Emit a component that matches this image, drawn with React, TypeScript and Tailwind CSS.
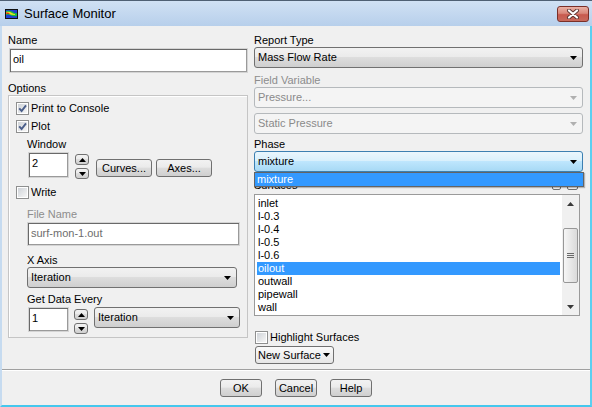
import React from "react";

const btnGrad =
  "bg-[linear-gradient(#f2f2f2_0%,#ebebeb_45%,#dddddd_50%,#cfcfcf_100%)]";
const sunken =
  "bg-white border border-[#d4d4d4] shadow-[inset_1px_1px_0_#696969,inset_-1px_-1px_0_#9a9a9a]";

function Arrow({ color = "#000", up = false }: { color?: string; up?: boolean }) {
  return (
    <svg width="7" height="4" viewBox="0 0 7 4" className="shrink-0">
      <path d={up ? "M0 4H7L3.5 0Z" : "M0 0H7L3.5 4Z"} fill={color} />
    </svg>
  );
}

function Select({
  value,
  className = "",
  variant = "normal",
}: {
  value: string;
  className?: string;
  variant?: "normal" | "disabled" | "focus";
}) {
  const v =
    variant === "disabled"
      ? "border-[#b5b9bc] bg-[#f4f4f4] text-[#8a8a8a]"
      : variant === "focus"
      ? "border-[#3c7fb1] bg-[linear-gradient(#eaf6fd_0%,#d9f0fc_45%,#bee6fd_50%,#a7d9f5_100%)]"
      : `border-[#707070] ${btnGrad}`;
  return (
    <div
      className={`h-[21px] rounded-[3px] border flex items-center justify-between pl-[3px] pr-[5px] ${v} ${className}`}
    >
      <span>{value}</span>
      <Arrow color={variant === "disabled" ? "#b0b0b0" : "#000"} />
    </div>
  );
}

function Check({ checked = false }: { checked?: boolean }) {
  return (
    <span className="w-[13px] h-[13px] border border-[#8e8f8f] bg-white p-px flex shrink-0">
      <span className="flex-1 bg-[linear-gradient(135deg,#cfd3d8,#f6f6f6)] flex items-center justify-center">
        {checked && (
          <svg width="9" height="9" viewBox="0 0 9 9">
            <path d="M1.2 4.3 L3.6 7 L8 1.3" fill="none" stroke="#4a5e8a" strokeWidth="1.9" />
          </svg>
        )}
      </span>
    </span>
  );
}

function CheckRow({ label, checked }: { label: string; checked?: boolean }) {
  return (
    <div className="flex items-center h-[13px] gap-[2px]">
      <Check checked={checked} />
      <span>{label}</span>
    </div>
  );
}

function Button({ label, className = "" }: { label: string; className?: string }) {
  return (
    <div
      className={`h-[18px] rounded-[3px] border border-[#707070] ${btnGrad} flex items-center justify-center ${className}`}
    >
      {label}
    </div>
  );
}

function SpinBtn({ up }: { up?: boolean }) {
  return (
    <div
      className={`w-[14px] h-[11px] rounded-[3px] border border-[#707070] ${btnGrad} flex items-center justify-center`}
    >
      <Arrow up={up} />
    </div>
  );
}

function Spinner() {
  return (
    <div className="flex flex-col gap-[3px] pt-[2px]">
      <SpinBtn up />
      <SpinBtn />
    </div>
  );
}

const surfaces = ["inlet", "l-0.3", "l-0.4", "l-0.5", "l-0.6", "oilout", "outwall", "pipewall", "wall"];

export default function App() {
  return (
    <div className="w-[592px] h-[407px] flex flex-col bg-[#f0f0f0] overflow-hidden font-['Liberation_Sans',Arial,sans-serif] text-[11px] leading-[13px] text-black">
      {/* Title bar */}
      <div className="h-[26px] shrink-0 flex items-center border-t border-[#4f6074] bg-[linear-gradient(#d0e1f4,#b7cfeb)] pl-[5px] pr-[3px]">
        <svg width="13" height="10" viewBox="0 0 13 10" className="shrink-0">
          <rect x="0" y="0" width="13" height="10" fill="#111" />
          <rect x="1" y="1" width="11" height="8" fill="#1f3fd0" />
          <path d="M1 2 Q5 1 8 3 Q10 5 12 4 L12 7 Q8 8 5 6 Q3 5 1 6Z" fill="#18c040" />
          <path d="M1 3 Q4 2 7 4 Q8 5 10 5 L10 6 Q6 6 4 5 Q2 4 1 5Z" fill="#f0e020" />
          <path d="M1 3.5 Q3 3 5 4.5 L3 5 Q2 4.5 1 4.5Z" fill="#e02010" />
        </svg>
        <span className="ml-[6px] text-[13px] leading-[15px]">Surface Monitor</span>
        <div className="ml-auto w-[32px] h-[16px] rounded-[3px] border border-[#7a2f28] bg-[linear-gradient(#eab1a4_0%,#d9877a_45%,#c85a4e_55%,#c86a5c_100%)] flex items-center justify-center">
          <svg width="14" height="10" viewBox="0 0 14 10">
            <path d="M3 1.5 L11 8.5 M11 1.5 L3 8.5" stroke="#5a3431" strokeWidth="4" strokeLinecap="round" />
            <path d="M3 1.5 L11 8.5 M11 1.5 L3 8.5" stroke="#ffffff" strokeWidth="2.2" strokeLinecap="round" />
          </svg>
        </div>
      </div>

      {/* Body */}
      <div className="flex-1 flex flex-col border-l-2 border-l-[#c6dbf0] border-r-2 border-r-[#5ccff0] border-b-2 border-b-[#45c7ed]">
        <div className="h-[343px] shrink-0 flex pt-[8px] pl-[6px]">
          {/* Left column */}
          <div className="w-[240px] flex flex-col">
            <div className="h-[13px]">Name</div>
            <div className={`ml-[1px] mt-[1px] h-[25px] w-[239px] ${sunken} pl-[3px] pt-[4px]`}>oil</div>
            <div className="mt-[9px] h-[13px]">Options</div>
            <div className="h-[243px] border border-[#c5c5c5] shadow-[inset_1px_1px_0_#ffffff] pl-[7px] pt-[6px] flex flex-col">
              <CheckRow label="Print to Console" checked />
              <div className="mt-[5px]">
                <CheckRow label="Plot" checked />
              </div>
              <div className="mt-[5px] ml-[11px] h-[13px]">Window</div>
              <div className="mt-[1px] flex items-start">
                <div className={`ml-[12px] w-[41px] h-[26px] ${sunken} pl-[3px] pt-[4px]`}>2</div>
                <div className="ml-[6px]">
                  <Spinner />
                </div>
                <Button label="Curves..." className="ml-[7px] mt-[7px] w-[56px]" />
                <Button label="Axes..." className="ml-[4px] mt-[7px] w-[56px]" />
              </div>
              <div className="mt-[7px]">
                <CheckRow label="Write" />
              </div>
              <div className="mt-[9px] ml-[11px] h-[13px] text-[#8d8d8d]">File Name</div>
              <div
                className={`mt-[1px] ml-[11px] w-[213px] h-[24px] ${sunken} pl-[3px] pt-[4px] text-[#6d6d6d]`}
              >
                surf-mon-1.out
              </div>
              <div className="mt-[8px] ml-[11px] h-[13px]">X Axis</div>
              <Select value="Iteration" className="ml-[11px] w-[210px]" />
              <div className="mt-[5px] ml-[11px] h-[13px]">Get Data Every</div>
              <div className="mt-[1px] flex items-start">
                <div className={`ml-[12px] w-[41px] h-[25px] ${sunken} pl-[3px] pt-[4px]`}>1</div>
                <div className="ml-[5px]">
                  <Spinner />
                </div>
                <Select value="Iteration" className="ml-[6px] w-[146px]" />
              </div>
            </div>
          </div>

          {/* Right column */}
          <div className="ml-[6px] w-[329px] flex flex-col">
            <div className="h-[13px]">Report Type</div>
            <Select value="Mass Flow Rate" />
            <div className="mt-[6px] h-[13px] text-[#8d8d8d]">Field Variable</div>
            <Select value="Pressure..." variant="disabled" className="h-[20px]" />
            <Select value="Static Pressure" variant="disabled" className="mt-[5px]" />
            <div className="mt-[4px] h-[13px]">Phase</div>
            <div className="relative">
              <Select value="mixture" variant="focus" />
              <div className="absolute left-0 right-[-1px] top-[21px] h-[15px] z-10 border border-[#646464] bg-[#3399ff] shadow-[1px_1px_1px_rgba(0,0,0,0.25)]">
                <div className="h-[13px] text-white pl-[2px]">mixture</div>
              </div>
            </div>
            <div className="mt-[7px] h-[13px] flex items-center">
              <span>Surfaces</span>
              <div className="ml-auto flex items-center gap-[6px] pr-[5px]">
                <div className="w-[9px] h-[8px] rounded-[2px] border border-[#707070] bg-[#f2f2f2] flex items-center justify-center">
                  <div className="w-[5px] h-[3px] bg-black" />
                </div>
                <div className="w-[11px] h-[8px] rounded-[2px] border border-[#707070] bg-[#f2f2f2]" />
              </div>
            </div>
            <div className="mt-[2px] w-[326px] h-[122px] border border-[#9a9a9a] bg-white flex">
              <div className="pl-[2px] pt-[2px] w-[305px] flex flex-col">
                {surfaces.map((s) => (
                  <div
                    key={s}
                    className={`h-[13px] pl-[1px] ${s === "oilout" ? "bg-[#3399ff] text-white" : ""}`}
                  >
                    {s}
                  </div>
                ))}
              </div>
              <div className="ml-auto w-[17px] flex flex-col bg-[#f0f0f0]">
                <div className="h-[17px] flex items-center justify-center">
                  <Arrow up color="#3a3a3a" />
                </div>
                <div className="mt-[16px] mx-[1px] h-[55px] rounded-[2px] border border-[#979797] bg-[linear-gradient(90deg,#f6f6f6,#dadada)] flex flex-col items-center justify-center gap-[1px]">
                  <div className="w-[7px] h-px bg-[#6a6a6a]" />
                  <div className="w-[7px] h-px bg-[#6a6a6a]" />
                  <div className="w-[7px] h-px bg-[#6a6a6a]" />
                </div>
                <div className="mt-auto h-[17px] flex items-center justify-center">
                  <Arrow color="#3a3a3a" />
                </div>
              </div>
            </div>
            <div className="mt-[15px] ml-[1px]">
              <CheckRow label="Highlight Surfaces" />
            </div>
            <div className="mt-[2px] ml-[1px] w-[79px] h-[18px] rounded-[3px] border border-[#707070] bg-[linear-gradient(#fafafa,#e6e6e6)] flex items-center pl-[2px] gap-[2px]">
              <span>New Surface</span>
              <Arrow />
            </div>
          </div>
        </div>

        {/* Separator */}
        <div className="h-[2px] border-t border-t-[#a0a0a0] border-b border-b-white" />

        {/* Buttons */}
        <div className="mt-[8px] flex justify-center gap-[13px]">
          <Button label="OK" className="w-[42px]" />
          <Button label="Cancel" className="w-[42px]" />
          <Button label="Help" className="w-[42px]" />
        </div>
      </div>
    </div>
  );
}
